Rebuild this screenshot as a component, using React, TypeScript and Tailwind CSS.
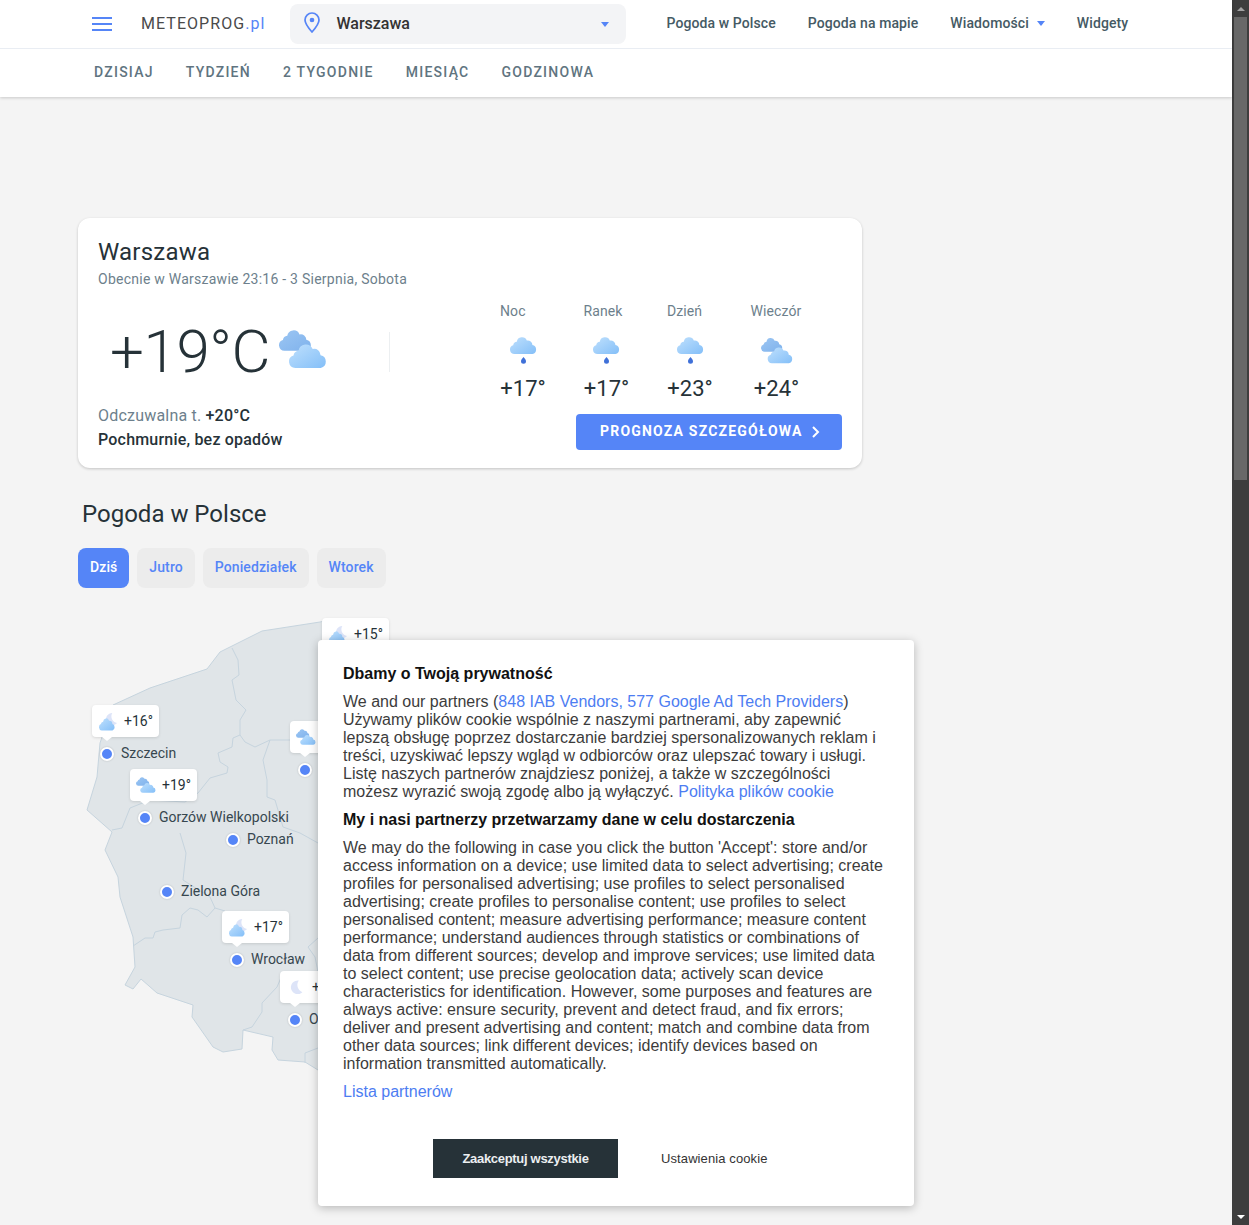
const tabs = ['DZISIAJ', 'TYDZIEŃ', '2 TYGODNIE', 'MIESIĄC', 'GODZINOWA'];

const forecast = [
  { label: 'Noc', temp: '+17°', icon: 'rain', width: 'w-[46px]' },
  { label: 'Ranek', temp: '+17°', icon: 'rain', width: 'w-[46px]' },
  { label: 'Dzień', temp: '+23°', icon: 'rain', width: 'w-[46px]' },
  { label: 'Wieczór', temp: '+24°', icon: 'clouds', width: 'w-[52px]' },
];

// the last two sit mostly under the cookie dialog, so only what shows is kept
const pins = [
  { name: 'Szczecin', dot: 'left-[22px] top-[129px]', label: 'left-[43px] top-[127px]', tip: 'left-[14px] top-[87px]', temp: '+16°', icon: 'moonCloud' },
  { name: 'Gorzów Wielkopolski', dot: 'left-[60px] top-[193px]', label: 'left-[81px] top-[191px]', tip: 'left-[52px] top-[151px]', temp: '+19°', icon: 'clouds' },
  { name: 'Poznań', dot: 'left-[148px] top-[215px]', label: 'left-[169px] top-[213px]' },
  { name: 'Zielona Góra', dot: 'left-[82px] top-[267px]', label: 'left-[103px] top-[265px]' },
  { name: 'Wrocław', dot: 'left-[152px] top-[335px]', label: 'left-[173px] top-[333px]', tip: 'left-[144px] top-[293px]', temp: '+17°', icon: 'moonCloud' },
  { name: 'Opole', dot: 'left-[210px] top-[395px]', label: 'left-[231px] top-[393px]', tip: 'left-[202px] top-[353px]', temp: '+16°', icon: 'moon' },
  { name: '', dot: 'left-[220px] top-[145px]', tip: 'left-[212px] top-[103px]', temp: '', icon: 'clouds' },
  { name: '', tip: 'left-[244px] top-0', temp: '+15°', icon: 'moonCloud' },
];

function Gradients() {
  return (
    <svg width="0" height="0" className="absolute">
      <defs>
        <linearGradient id="back" x1="0" y1="0" x2="1" y2="1">
          <stop offset="0" stopColor="#9cc6f3" />
          <stop offset="1" stopColor="#7fb2ec" />
        </linearGradient>
        <linearGradient id="front" x1="0" y1="0" x2="1" y2="1">
          <stop offset="0" stopColor="#bfe0fd" />
          <stop offset="1" stopColor="#84bff8" />
        </linearGradient>
      </defs>
    </svg>
  );
}

// 27x17 cloud, three bumps and a flat bottom
const cloud = 'M4.500 17A4.500 4.500 0 0 1 3.200 8.200 4 4 0 0 1 6.800 4.800 5.200 5.200 0 0 1 16.800 3.600 4.500 4.500 0 0 1 22.400 8 4.600 4.600 0 0 1 22.500 17Z';

function WeatherIcon({ type, width }: { type: string; width: number }) {
  if (type === 'rain') {
    return (
      <svg width={width} viewBox="0 0 27 27">
        <path d={cloud} fill="url(#front)" />
        <path d="M13.500 20c1.500 1.800 2.500 2.900 2.500 4.200a2.500 2.500 0 0 1-5 0c0-1.300 1-2.400 2.500-4.200Z" fill="#3f70d8" />
      </svg>
    );
  }
  if (type === 'clouds') {
    return (
      <svg width={width} viewBox="0 0 48 38">
        <path d={cloud} fill="url(#back)" transform="scale(1.220)" />
        <path d={cloud} fill="url(#front)" transform="translate(10 14) scale(1.410)" />
      </svg>
    );
  }
  if (type === 'moon') {
    return (
      <svg width={width} viewBox="0 0 20 20">
        <path d="M13.500 2a8.500 8.500 0 1 0 4.500 14.500A9.500 9.500 0 0 1 13.500 2Z" fill="#dde4f8" />
      </svg>
    );
  }
  return (
    <svg width={width} viewBox="0 0 20 20">
      <path d="M14 1a6.500 6.500 0 1 0 5 10.500A7 7 0 0 1 14 1Z" fill="#dde4f8" />
      <path d={cloud} fill="url(#front)" transform="translate(0 6.500) scale(.630 .760)" />
    </svg>
  );
}

function PolandMap() {
  return (
    <svg className="absolute left-0 top-0" width="262" height="470" viewBox="78 618 262 470">
      <path
        d="M340 618 L320 622 L262 631 L220 652 L207 669 L150 688 L113 705 L100 743 L97 777 L87 810 L112 832 L105 850 L118 877 L120 897 L133 937 L135 967 L125 985 L133 989 L141 979 L157 993 L193 1005 L192 1017 L213 1047 L223 1052 L242 1049 L243 1030 L273 1037 L272 1050 L278 1060 L305 1062 L318 1070 L340 1075 Z"
        fill="#e0e5e8"
        stroke="#c6d4de"
        strokeWidth="1"
      />
      <g fill="none" stroke="#c6d4de" strokeWidth="1">
        <path d="M232 648 L238 660 L239 675 L232 680 L236 700 L246 710 L240 720 L240 735 L245 742 L255 747 L270 740 L290 740" />
        <path d="M240 735 L233 738 L232 747 L218 753 L220 762 L228 767 L227 773 L210 778 L198 793 L185 802 L150 800 L130 808 L122 828 L112 830" />
        <path d="M270 740 L263 760 L267 780 L267 797 L275 800 L283 827 L300 833 L318 843" />
        <path d="M180 833 L186 853 L183 880 L210 897 L215 908 L207 917 L198 910 L190 908 L182 915 L180 928 L163 930 L155 932 L153 938 L145 938 L133 946" />
        <path d="M215 908 L225 911" />
        <path d="M318 938 L308 947 L315 957 L318 972 L283 973 L277 987 L262 1003 L262 1012 L252 1027 L243 1030" />
        <path d="M318 1048 L305 1053 L305 1063" />
      </g>
    </svg>
  );
}

function Pin({ pin }: { pin: (typeof pins)[number] }) {
  return (
    <>
      {pin.tip && (
        <div className={`absolute ${pin.tip} flex h-8 w-[67px] items-center gap-[6px] rounded bg-white pl-[6px] shadow-[0_1px_3px_rgba(0,0,0,0.12)]`}>
          <span className="flex w-[20px] justify-center">
            <WeatherIcon type={pin.icon ?? ''} width={pin.icon === 'clouds' ? 20 : pin.icon === 'moon' ? 16 : 19} />
          </span>
          {pin.temp && <span className="text-[14px] leading-none text-[#263238]">{pin.temp}</span>}
          <div className="absolute bottom-[-4px] left-[10px] h-0 w-0 border-x-[5px] border-t-[4px] border-x-transparent border-t-white" />
        </div>
      )}
      {pin.dot && <div className={`absolute ${pin.dot} h-[14px] w-[14px] rounded-full border-2 border-white bg-[#5585f7] shadow-[0_0_2px_rgba(0,0,0,0.2)]`} />}
      {pin.name && <span className={`absolute ${pin.label} whitespace-nowrap text-[14px] leading-[16px] text-[#37474f]`}>{pin.name}</span>}
    </>
  );
}

function CookieDialog() {
  return (
    <div className="absolute left-[318px] top-[640px] z-20 h-[566px] w-[596px] rounded bg-white px-[25px] pt-[25px] font-['Liberation_Sans',sans-serif] text-[16px] leading-[18px] text-[#3c3c3c] shadow-[0_2px_10px_rgba(0,0,0,0.25)]">
      <h2 className="mb-[10px] text-[16px] font-bold text-[#111]">Dbamy o Twoją prywatność</h2>
      <p>
        We and our partners (<span className="text-[#4d7df2]">848 IAB Vendors, 577 Google Ad Tech Providers</span>) Używamy plików cookie wspólnie z naszymi partnerami, aby zapewnić lepszą obsługę poprzez dostarczanie bardziej spersonalizowanych reklam i treści, uzyskiwać lepszy wgląd w odbiorców oraz ulepszać towary i usługi. Listę naszych partnerów znajdziesz poniżej, a także w szczególności możesz wyrazić swoją zgodę albo ją wyłączyć. <span className="text-[#4d7df2]">Polityka plików cookie</span>
      </p>
      <h3 className="my-[10px] text-[16px] font-bold text-[#111]">My i nasi partnerzy przetwarzamy dane w celu dostarczenia</h3>
      <p>
        We may do the following in case you click the button 'Accept': store and/or access information on a device; use limited data to select advertising; create profiles for personalised advertising; use profiles to select personalised advertising; create profiles to personalise content; use profiles to select personalised content; measure advertising performance; measure content performance; understand audiences through statistics or combinations of data from different sources; develop and improve services; use limited data to select content; use precise geolocation data; actively scan device characteristics for identification. However, some purposes and features are always active: ensure security, prevent and detect fraud, and fix errors; deliver and present advertising and content; match and combine data from other data sources; link different devices; identify devices based on information transmitted automatically.
      </p>
      <p className="mt-[10px] text-[#4d7df2]">Lista partnerów</p>
      <div className="mt-[38px] flex items-center pl-[90px]">
        <button className="h-[39px] w-[185px] bg-[#263238] text-[13px] font-bold tracking-[-0.3px] text-[#eceff1]">Zaakceptuj wszystkie</button>
        <button className="ml-[43px] text-[13px] tracking-[0.1px] text-[#333]">Ustawienia cookie</button>
      </div>
    </div>
  );
}

function Scrollbar() {
  return (
    <div className="flex w-[17px] shrink-0 flex-col items-center bg-[#3e3e3e]">
      <div className="flex h-[17px] items-center justify-center">
        <div className="h-0 w-0 border-x-[4px] border-b-[4px] border-x-transparent border-b-[#a3a3a3]" />
      </div>
      <div className="h-[463px] w-[13px] bg-[#686868]" />
      <div className="mt-auto flex h-[17px] items-center justify-center">
        <div className="h-0 w-0 border-x-[4px] border-t-[4px] border-x-transparent border-t-white" />
      </div>
    </div>
  );
}

export default function App() {
  return (
    <div className="relative flex h-[1225px] w-[1249px] overflow-hidden bg-[#f4f4f4] font-['Roboto',sans-serif]">
      <Gradients />
      <div className="relative min-w-0 flex-1">
        <header className="bg-white shadow-[0_1px_3px_rgba(0,0,0,0.18)]">
          <div className="flex h-[49px] items-center border-b border-[#e9edf3] pb-[1px]">
            <div className="ml-[92px] flex w-[20px] flex-col gap-[4px]">
              <span className="h-[2px] bg-[#5585f7]" />
              <span className="h-[2px] bg-[#5585f7]" />
              <span className="h-[2px] bg-[#5585f7]" />
            </div>
            <div className="ml-[29px] text-[16px] tracking-[1.05px] text-[#4a4a4a]">
              METEOPROG<span className="text-[#5585f7]">.pl</span>
            </div>
            <div className="ml-[25px] flex h-[40px] w-[336px] items-center rounded-lg bg-[#f3f4f6]">
              <svg className="ml-[13px] -translate-y-[2px]" width="18" height="22" viewBox="0 0 18 22" fill="none" stroke="#5585f7" strokeWidth="1.7">
                <path d="M9 21c-4-4.500-7-8.500-7-12a7 7 0 0 1 14 0c0 3.500-3 7.500-7 12Z" />
                <circle cx="9" cy="9" r="1.500" fill="#5585f7" />
              </svg>
              <span className="ml-[15px] text-[16px] font-medium text-[#333]">Warszawa</span>
              <span className="ml-auto mr-[17px] mt-[1px] h-0 w-0 border-x-[4px] border-t-[5px] border-x-transparent border-t-[#5585f7]" />
            </div>
            <nav className="ml-[40px] flex items-center gap-[32px] text-[14px] font-medium tracking-[0.1px] text-[#455a64]">
              <span>Pogoda w Polsce</span>
              <span>Pogoda na mapie</span>
              <span className="flex items-center gap-[8px]">
                Wiadomości
                <span className="h-0 w-0 border-x-[4px] border-t-[5px] border-x-transparent border-t-[#5585f7]" />
              </span>
              <span>Widgety</span>
            </nav>
          </div>
          <div className="flex h-[48px] items-center gap-[32px] pb-[2px] pl-[94px] text-[14px] font-medium tracking-[1.25px] text-[#607480]">
            {tabs.map((t) => (
              <span key={t}>{t}</span>
            ))}
          </div>
        </header>

        <main className="pl-[78px] pt-[121px]">
          <section className="h-[250px] w-[784px] rounded-xl bg-white px-[20px] pt-[20px] shadow-[0_1px_3px_rgba(0,0,0,0.2)]">
            <h1 className="text-[24px] leading-[28px] tracking-[0.2px] text-[#263238]">Warszawa</h1>
            <p className="mt-[4px] text-[14px] leading-[18px] tracking-[0.25px] text-[#6d7f8c]">Obecnie w Warszawie 23:16 - 3 Sierpnia, Sobota</p>
            <div className="flex">
              <div className="w-[402px] shrink-0">
                <div className="mt-[34px] flex h-[60px] items-center pl-[12px]">
                  <span className="text-[60px] font-light leading-none tracking-[-0.4px] text-[#263238]">+19°C</span>
                  <span className="-mt-[6px] ml-[9px]"><WeatherIcon type="clouds" width={48} /></span>
                  <span className="ml-[62px] h-[40px] w-px bg-[#eceff1]" />
                </div>
                <p className="mt-[22px] text-[16px] leading-[24px] tracking-[0.2px] text-[#6d7f8c]">
                  Odczuwalna t. <span className="font-medium text-[#263238]">+20°C</span>
                </p>
                <p className="text-[16px] font-medium leading-[24px] tracking-[0.2px] text-[#263238]">Pochmurnie, bez opadów</p>
              </div>
              <div className="pt-[14px]">
                <div className="flex gap-[37.5px]">
                  {forecast.map((f) => (
                    <div key={f.label} className={f.width}>
                      <div className="whitespace-nowrap text-[14px] leading-[18px] tracking-[0.1px] text-[#6d7f8c]">{f.label}</div>
                      <div className="mt-[17px] flex h-[27px] justify-center"><WeatherIcon type={f.icon} width={f.icon === 'rain' ? 27 : 32} /></div>
                      <div className="mt-[12px] text-center text-[22px] leading-[26px] text-[#263238]">{f.temp}</div>
                    </div>
                  ))}
                </div>
                <button className="ml-[76px] mt-[12px] flex h-[36px] w-[266px] items-center gap-[8px] rounded bg-[#5585f7] pb-[1px] pl-[24px] text-[14px] font-bold tracking-[1.2px] text-white">
                  PROGNOZA SZCZEGÓŁOWA
                  <svg width="9" height="12" viewBox="0 0 9 12" fill="none" stroke="white" strokeWidth="2">
                    <path d="M2 1 L7 6 L2 11" />
                  </svg>
                </button>
              </div>
            </div>
          </section>

          <h2 className="ml-[4px] mt-[30px] text-[24px] leading-[32px] text-[#263238]">Pogoda w Polsce</h2>
          <div className="mt-[18px] flex gap-[8px] text-[14px] font-medium tracking-[0.1px]">
            <span className="flex h-[40px] items-center rounded-lg bg-[#5585f7] px-[12px] pb-[1px] text-white">Dziś</span>
            <span className="flex h-[40px] items-center rounded-lg bg-[#ececec] px-[12px] pb-[1px] text-[#5585f7]">Jutro</span>
            <span className="flex h-[40px] items-center rounded-lg bg-[#ececec] px-[12px] pb-[1px] text-[#5585f7]">Poniedziałek</span>
            <span className="flex h-[40px] items-center rounded-lg bg-[#ececec] px-[12px] pb-[1px] text-[#5585f7]">Wtorek</span>
          </div>
          <div className="relative mt-[30px] h-[470px] w-[400px]">
            <PolandMap />
            {pins.map((p, i) => (
              <Pin key={i} pin={p} />
            ))}
          </div>
        </main>
        <CookieDialog />
      </div>
      <Scrollbar />
    </div>
  );
}
